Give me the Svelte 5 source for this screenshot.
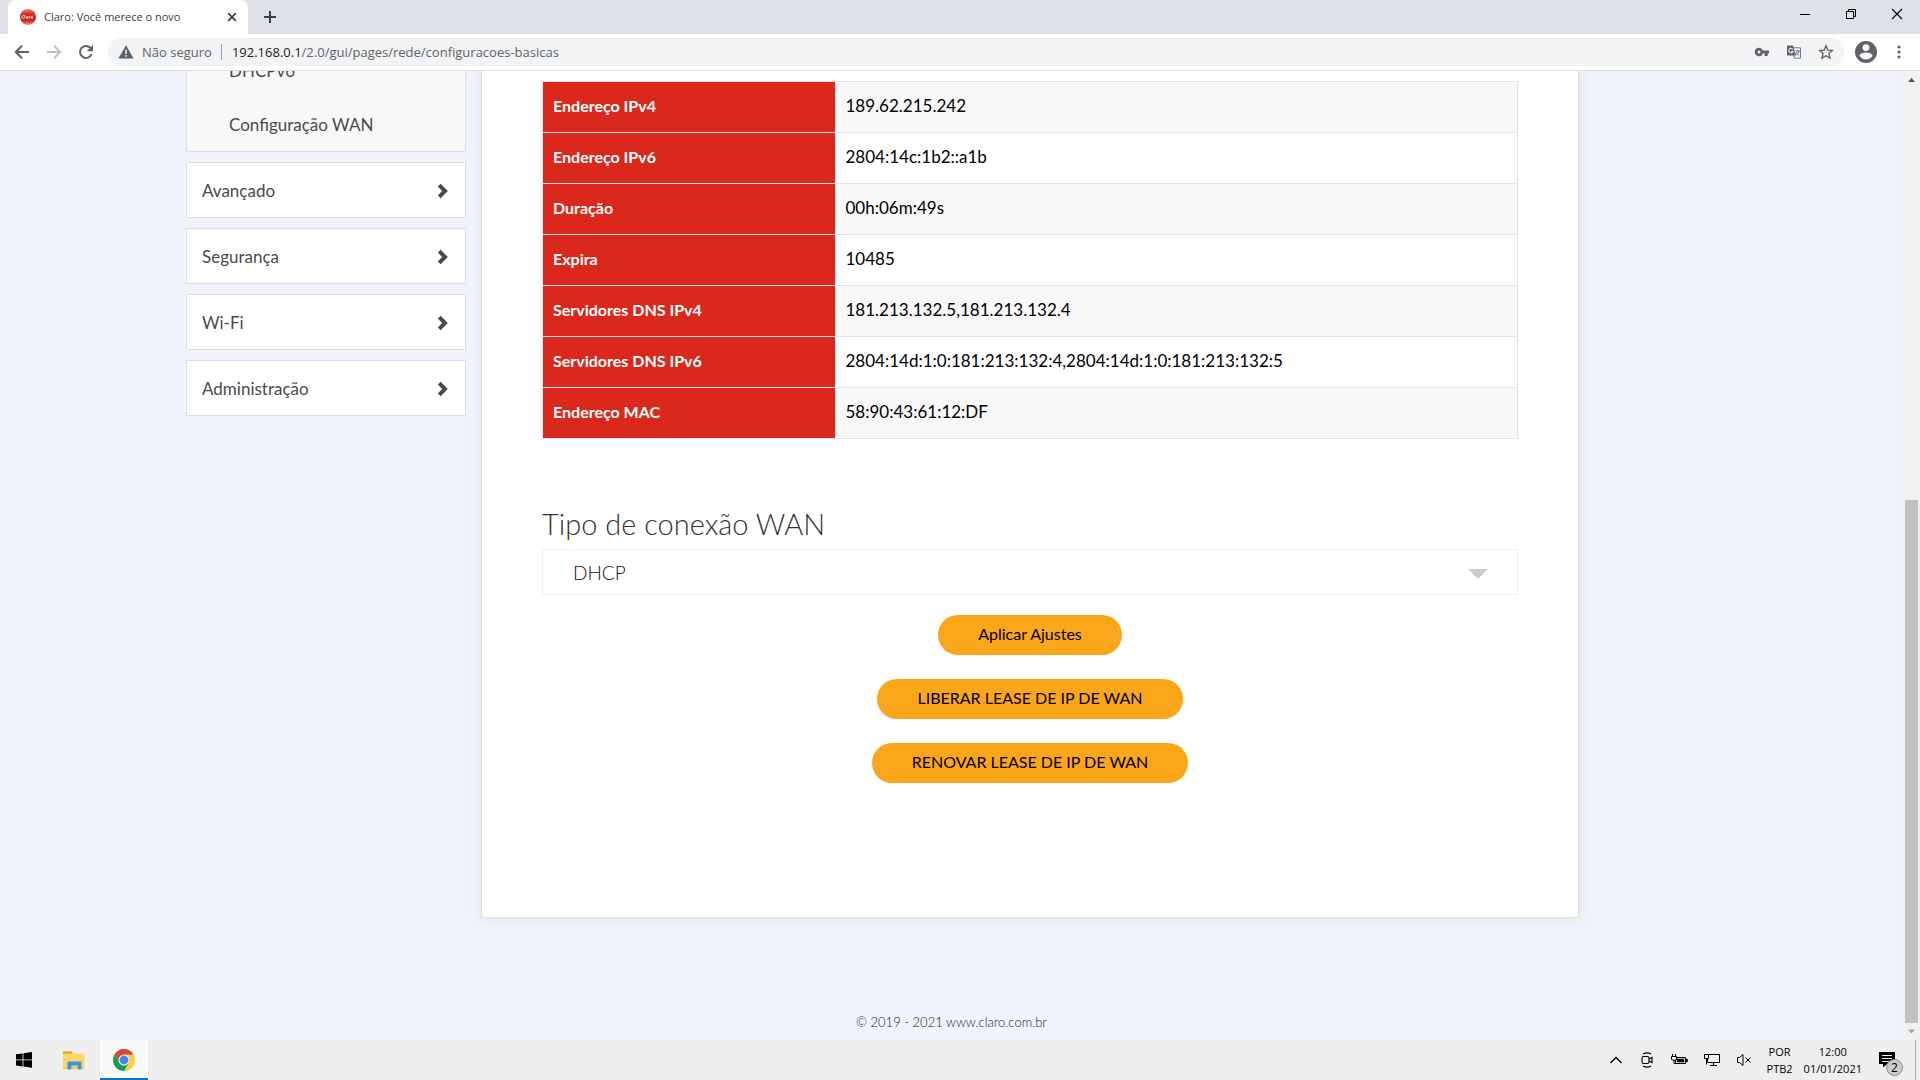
<script>
  const menu = ['Avançado', 'Segurança', 'Wi-Fi', 'Administração'];
  const submenu = ['DHCPv6', 'Configuração WAN'];
  const rows = [
    ['Endereço IPv4', '189.62.215.242'],
    ['Endereço IPv6', '2804:14c:1b2::a1b'],
    ['Duração', '00h:06m:49s'],
    ['Expira', '10485'],
    ['Servidores DNS IPv4', '181.213.132.5,181.213.132.4'],
    ['Servidores DNS IPv6', '2804:14d:1:0:181:213:132:4,2804:14d:1:0:181:213:132:5'],
    ['Endereço MAC', '58:90:43:61:12:DF'],
  ];
  const actions = ['Aplicar Ajustes', 'LIBERAR LEASE DE IP DE WAN', 'RENOVAR LEASE DE IP DE WAN'];
</script>

<div class="screen">
  <header class="browser">
    <div class="tabs">
      <div class="tab">
        <svg class="favicon" width="16" height="16" viewBox="0 0 16 16">
          <defs>
            <linearGradient id="fav" x1="0" y1="0" x2="0" y2="1">
              <stop offset="0" stop-color="#e8806f" />
              <stop offset="0.35" stop-color="#d3261f" />
              <stop offset="0.7" stop-color="#c9201c" />
              <stop offset="1" stop-color="#ee9a8e" />
            </linearGradient>
          </defs>
          <circle cx="8" cy="8" r="8" fill="url(#fav)" />
          <path d="M3.6 6.6Q1.8 6.4 1.8 8t1.8 1.4M4.8 6v3.4M6.4 7.6h1.4v1.8H6.2q-.4-1 1.4-1M9.2 9.4V7.6h1M11.8 7.6a.9.9 0 1 0 .1 0M13.6 6.4l.8-.7" fill="none" stroke="#fff" stroke-width="0.8" />
        </svg>
        <span class="tab-title">Claro: Você merece o novo</span>
        <button class="icon" aria-label="Fechar guia">
          <svg width="16" height="16" viewBox="0 0 16 16"><path d="M4.2 4.2l7.6 7.6M11.8 4.2l-7.6 7.6" stroke="#3c4043" stroke-width="1.7" /></svg>
        </button>
      </div>
      <button class="icon new-tab" aria-label="Nova guia">
        <svg width="16" height="16" viewBox="0 0 16 16"><path d="M8 2v12M2 8h12" stroke="#3c4043" stroke-width="2" /></svg>
      </button>
      <div class="window-buttons">
        <button class="icon" aria-label="Minimizar"><svg width="46" height="28" viewBox="0 0 46 28"><path d="M18 14.500h10" stroke="#000" /></svg></button>
        <button class="icon" aria-label="Restaurar"><svg width="46" height="28" viewBox="0 0 46 28"><path d="M18.500 11.500h7v7h-7zM20.500 11.500v-2h7v7h-2" fill="none" stroke="#000" /></svg></button>
        <button class="icon" aria-label="Fechar"><svg width="46" height="28" viewBox="0 0 46 28"><path d="M18 9l10 10M28 9l-10 10" stroke="#000" stroke-width="1.1" /></svg></button>
      </div>
    </div>
    <div class="toolbar">
      <button class="icon nav" aria-label="Voltar"><svg width="16" height="16" viewBox="0 0 16 16"><path d="M15 8H2.500M8 1.800L1.800 8 8 14.200" fill="none" stroke="#5f6368" stroke-width="2" /></svg></button>
      <button class="icon nav" aria-label="Avançar" disabled><svg width="16" height="16" viewBox="0 0 16 16"><path d="M1 8h12.500M8 1.800L14.200 8 8 14.200" fill="none" stroke="#bdc1c6" stroke-width="2" /></svg></button>
      <button class="icon" aria-label="Recarregar"><svg width="16" height="16" viewBox="0 0 16 16"><path d="M13.600 10.200A6 6 0 1 1 12.400 3.800L14 5.500" fill="none" stroke="#5f6368" stroke-width="2" /><path d="M15 1v6.300H8.700z" fill="#5f6368" /></svg></button>
      <div class="omnibox">
        <svg width="16" height="16" viewBox="0 0 16 16"><path d="M8 1.200L15.600 14.500H.4z" fill="#5f6368" /><path d="M8 5.800v4.200M8 11v1.800" stroke="#f1f3f4" stroke-width="1.500" /></svg>
        <span class="insecure">Não seguro</span>
        <span class="divider"></span>
        <span class="url"><b>192.168.0.1</b>/2.0/gui/pages/rede/configuracoes-basicas</span>
        <button class="icon" aria-label="Senhas"><svg width="16" height="16" viewBox="0 0 16 16"><path fill-rule="evenodd" d="M5 3.700a4.200 4.200 0 0 1 3.900 2.700H15v3h-1.300V12h-3V9.400H8.900A4.200 4.200 0 1 1 5 3.700zm0 2.700a1.500 1.500 0 1 0 0 3 1.500 1.500 0 0 0 0-3z" fill="#5f6368" /></svg></button>
        <button class="icon" aria-label="Traduzir"><svg width="16" height="16" viewBox="0 0 16 16"><path d="M7 3.800h7.500v10.400H8.500l-1-3" fill="none" stroke="#75797d" /><path d="M1 1.500h6l3 10H1z" fill="#5f6368" /><path d="M7 5.500A2.200 2.200 0 1 0 7.100 7.500H5" fill="none" stroke="#e8eaed" stroke-width="1.100" /><path d="M9.500 7h4.200M11.600 6v1M13 7q-.6 2.800-3 4.200M10.300 8.200q1 2 3 3.300" fill="none" stroke="#5f6368" stroke-width="0.900" /></svg></button>
        <button class="icon" aria-label="Favoritar"><svg width="16" height="16" viewBox="0 0 16 16"><path d="M8 1.800l1.800 4.300 4.700.4-3.600 3 1.100 4.600L8 11.700l-4 2.400 1.100-4.600-3.600-3 4.700-.4z" fill="none" stroke="#5f6368" stroke-width="1.300" /></svg></button>
      </div>
      <button class="icon avatar" aria-label="Perfil"><svg width="22" height="22" viewBox="0 0 22 22"><circle cx="11" cy="11" r="11" fill="#5f6368" /><circle cx="11" cy="6.600" r="3.400" fill="#fff" /><path d="M4.400 14.800q1.800-3.300 6.600-3.300t6.600 3.300q-2.400 3.700-6.600 3.700t-6.600-3.700z" fill="#fff" /></svg></button>
      <button class="icon kebab" aria-label="Menu"><svg width="16" height="16" viewBox="0 0 16 16" fill="#5f6368"><circle cx="8" cy="3" r="1.600" /><circle cx="8" cy="8" r="1.600" /><circle cx="8" cy="13" r="1.600" /></svg></button>
    </div>
  </header>

  <div class="viewport">
    <div class="page">
      <div class="container">
        <nav class="sidebar">
          <ul class="submenu">
            {#each submenu as item}<li><a href="#top">{item}</a></li>{/each}
          </ul>
          {#each menu as item}
            <a class="menu-item" href="#top">
              {item}
              <svg width="12" height="18" viewBox="0 0 12 18"><path d="M1.200 4.200L7 10l-5.800 5.800" fill="none" stroke="#4a4a4a" stroke-width="4" /></svg>
            </a>
          {/each}
        </nav>
        <main class="card">
          <table>
            <tbody>
              {#each rows as [name, value]}
                <tr><th scope="row">{name}</th><td>{value}</td></tr>
              {/each}
            </tbody>
          </table>
          <label class="heading" for="wan">Tipo de conexão WAN</label>
          <div class="select-box">
            <select id="wan"><option>DHCP</option></select>
            <svg class="caret" width="20" height="10" viewBox="0 0 20 10"><path d="M0 0h20L10 10z" fill="#ccc" /></svg>
          </div>
          <div class="actions">
            {#each actions as action}<button class="pill">{action}</button>{/each}
          </div>
        </main>
      </div>
      <footer>© 2019 - 2021 www.claro.com.br</footer>
    </div>
    <div class="scrollbar">
      <svg width="17" height="17" viewBox="0 0 17 17"><path d="M5 11h7L8.500 7z" fill="#505050" /></svg>
      <div class="thumb"></div>
      <svg width="17" height="17" viewBox="0 0 17 17"><path d="M5 6.500h7l-3.500 4z" fill="#a3a3a3" /></svg>
    </div>
  </div>

  <div class="taskbar">
    <button class="icon task" aria-label="Iniciar"><svg width="16" height="16" viewBox="0 0 16 16"><path d="M0 2.300l6.600-.9v6.100H0zM7.400 1.300L16 .1v7.400H7.400zM0 8.300h6.600v6.200L0 13.600zM7.400 8.300H16v7.500l-8.600-1.200z" fill="#000" /></svg></button>
    <button class="icon task folder" aria-label="Explorador de Arquivos"><svg width="22" height="20" viewBox="0 0 22 20"><path d="M0 1.500h9l1 2v3H0z" fill="#e0a010" /><path d="M1 3.500h20.500V18.500H0V4.500z" fill="#fdd667" /><path d="M0 17.500h21.500v1H0z" fill="#e9b93c" /><path d="M4.500 19.500v-8h14v8h-3.800v-4h-6.400v4z" fill="#3c98da" /></svg></button>
    <button class="icon task active" aria-label="Google Chrome"><svg width="24" height="24" viewBox="0 0 24 24"><circle cx="12" cy="12" r="11" fill="#ffcd40" /><path d="M2.500 6.500A11 11 0 0 1 21.500 6.500H12L7.200 14.800z" fill="#db4437" /><path d="M2.500 6.500A11 11 0 0 0 12 23L16.800 14.800 12 17.500 7.200 14.800z" fill="#0f9d58" /><circle cx="12" cy="12" r="5.500" fill="#f1f1f1" /><circle cx="12" cy="12" r="4.400" fill="#4285f4" /></svg></button>
    <div class="tray">
      <button class="icon" aria-label="Mostrar ícones ocultos"><svg width="16" height="16" viewBox="0 0 16 16"><path d="M2.500 11L8 5.500l5.500 5.500" fill="none" stroke="#000" stroke-width="1.300" /></svg></button>
      <button class="icon" aria-label="Câmera"><svg width="16" height="16" viewBox="0 0 16 16" fill="none" stroke="#000" stroke-width="1.100"><rect x="3" y="4.500" width="7" height="7" rx="1.500" /><path d="M10 7l3-1.500v5L10 9M4 2q4-2.200 8 0M4 14q4 2.200 8 0" /></svg></button>
      <button class="icon" aria-label="Bateria"><svg width="18" height="16" viewBox="0 0 18 16"><path d="M5.500 5.500h10v6h-10z" fill="#eee" stroke="#000" /><path d="M7 7h7v3H7zM16 7h1.500v3H16z" fill="#000" stroke="#000" stroke-width="0.500" /><path d="M2.500 2v3M5.500 2v3M1.500 4.500h5v3q-2.500 2-5 0zM4 9v2.500h2" fill="#eee" stroke="#000" /></svg></button>
      <button class="icon" aria-label="Rede"><svg width="18" height="16" viewBox="0 0 18 16" fill="none" stroke="#000"><path d="M6 2.500h10.500v8h-12V7M10.500 10.500v3M7 13.500h7M1.500 2.500h4v4h-4zM3.500 6.500v6" /></svg></button>
      <button class="icon" aria-label="Volume"><svg width="16" height="16" viewBox="0 0 16 16" fill="none" stroke="#000"><path d="M1.500 5.500h2L7 2.500v11L3.500 10.500h-2zM9.500 5.500l5 5M14.500 5.500l-5 5" /></svg></button>
    </div>
    <div class="stack lang"><span>POR</span><span>PTB2</span></div>
    <div class="stack clock"><span>12:00</span><span>01/01/2021</span></div>
    <button class="icon notice" aria-label="Notificações">
      <svg width="16" height="16" viewBox="0 0 16 16"><path d="M0 0h16v12H8l-4 3.500V12H0z" fill="#000" /><path d="M3 3.500h10M3 6.500h10M3 9.500h7" stroke="#eee" /></svg>
      <span class="badge">2</span>
    </button>
    <div class="desktop-edge"></div>
  </div>
</div>

<style>
  :global(body) { margin: 0; }
  .screen {
    display: flex;
    flex-direction: column;
    height: 100vh;
    font-family: "Open Sans", "Noto Sans", sans-serif;
    font-size: 12px;
    color: #000;
  }
  .screen :global(*) { box-sizing: border-box; }
  .icon {
    display: flex;
    align-items: center;
    justify-content: center;
    padding: 0;
    border: 0;
    background: none;
    flex: none;
  }
  svg { display: block; flex: none; }

  .tabs { display: flex; height: 34px; background: #dee1e6; padding-left: 8px; }
  .tab {
    display: flex;
    align-items: center;
    width: 240px;
    padding: 0 8px 0 12px;
    background: #fff;
    border-radius: 8px 8px 0 0;
    color: #3c4043;
  }
  .tab-title { flex: 1; margin-left: 8px; padding-bottom: 1px; font-size: 11px; white-space: nowrap; }
  .new-tab { width: 28px; margin-left: 8px; }
  .window-buttons { display: flex; align-items: flex-start; margin-left: auto; }
  .toolbar {
    display: flex;
    align-items: center;
    height: 37px;
    padding: 0 13px 1px 14px;
    border-bottom: 1px solid #dadce0;
    background: #fff;
  }
  .nav { margin-right: 16px; }
  .omnibox {
    display: flex;
    align-items: center;
    flex: 1;
    height: 28px;
    margin: 0 11px 0 14px;
    padding: 0 10px;
    border-radius: 14px;
    background: #f1f3f4;
    font-size: 13px;
    color: #5f6368;
  }
  .omnibox .icon { margin-left: 16px; }
  .insecure { margin-left: 8px; }
  .divider { width: 1px; height: 16px; margin: 0 10px 0 9px; background: #9aa0a6; }
  .url { flex: 1; }
  .url b { font-weight: 400; color: #202124; }
  .kebab { margin-left: 14px; }

  .viewport {
    display: flex;
    flex: 1;
    min-height: 0;
    overflow: hidden;
    background: #f0f3fc;
    font-family: Lato, "Open Sans", sans-serif;
  }
  .page { display: flex; flex-direction: column; flex: 1; }
  .container {
    display: flex;
    align-items: flex-start;
    gap: 15px;
    width: 100%;
    max-width: 1531px;
    margin: 0 auto;
  }
  .sidebar { display: flex; flex-direction: column; gap: 10px; flex: none; width: 280px; margin-top: -28px; font-size: 17px; }
  .sidebar a { color: #4a4a4a; text-decoration: none; }
  .submenu { margin: 0; padding: 0; list-style: none; background: #f8f8f8; border: 1px solid #dedede; border-top: 0; }
  .submenu a { display: flex; align-items: center; height: 54px; padding-left: 42px; }
  .menu-item {
    display: flex;
    align-items: center;
    justify-content: space-between;
    height: 56px;
    padding: 0 15px;
    background: #fff;
    border: 1px solid #dedede;
  }
  .card {
    flex: 0 1 1098px;
    padding: 10px 60px 134px;
    background: #fff;
    border: 1px solid #dedede;
    border-top: 0;
    box-shadow: 0 0 12px rgba(0, 0, 0, 0.08);
  }
  table { width: 100%; border-collapse: collapse; font-size: 17px; }
  th, td { height: 51px; padding: 0 10px 4px; border: 1px solid #e2e3e5; text-align: left; }
  th { width: 30%; background: #da291c; color: #fff; font-size: 16px; font-weight: 700; }
  tr:nth-child(odd) td { background: #f8f8f8; }
  .heading { display: block; margin-top: 65px; font-size: 29px; line-height: 40px; font-weight: 300; color: #333; }
  .select-box { position: relative; margin-top: 5px; }
  select {
    display: block;
    width: 100%;
    height: 46px;
    padding: 0 30px;
    border: 1px solid #eee;
    border-radius: 0;
    background: #fff;
    appearance: none;
    font-family: inherit;
    font-size: 19px;
    font-weight: 300;
    color: #111;
  }
  .caret { position: absolute; right: 30px; top: 20px; pointer-events: none; }
  .actions { display: flex; flex-direction: column; align-items: center; gap: 24px; margin-top: 20px; }
  .pill {
    height: 40px;
    padding: 0 40px 4px;
    border: 0;
    border-radius: 20px;
    background: #faa61a;
    font-family: inherit;
    font-size: 16px;
    color: #000;
  }
  footer { margin-top: auto; padding-bottom: 8px; text-align: center; font-size: 13px; font-weight: 300; line-height: 20px; color: #222; }
  .scrollbar { display: flex; flex-direction: column; align-items: center; width: 17px; background: #f1f1f1; }
  .thumb { flex: 1; width: 13px; margin-top: 412px; background: #c1c1c1; }

  .taskbar { display: flex; height: 40px; background: #eee; padding-right: 4px; }
  .task { width: 48px; margin-right: 2px; }
  .active { background: #f9f9f9; border-bottom: 2px solid #0078d7; padding-top: 2px; }
  .tray { display: flex; align-items: center; gap: 15px; margin-left: auto; }
  .stack { display: flex; flex-direction: column; justify-content: center; align-items: center; padding-bottom: 1px; font-size: 11px; line-height: 17px; }
  .lang { margin-left: 15px; }
  .clock { margin-left: 11px; }
  .notice { position: relative; margin: 0 20px 0 17px; }
  .badge {
    position: absolute;
    left: 7px;
    top: 19px;
    width: 17px;
    height: 17px;
    border: 1px solid #888;
    border-radius: 50%;
    background: #ccc;
    font-family: "Open Sans", sans-serif;
    font-size: 12px;
    line-height: 15px;
    text-align: center;
  }
  .desktop-edge { border-left: 1px solid #aaa; }
</style>
